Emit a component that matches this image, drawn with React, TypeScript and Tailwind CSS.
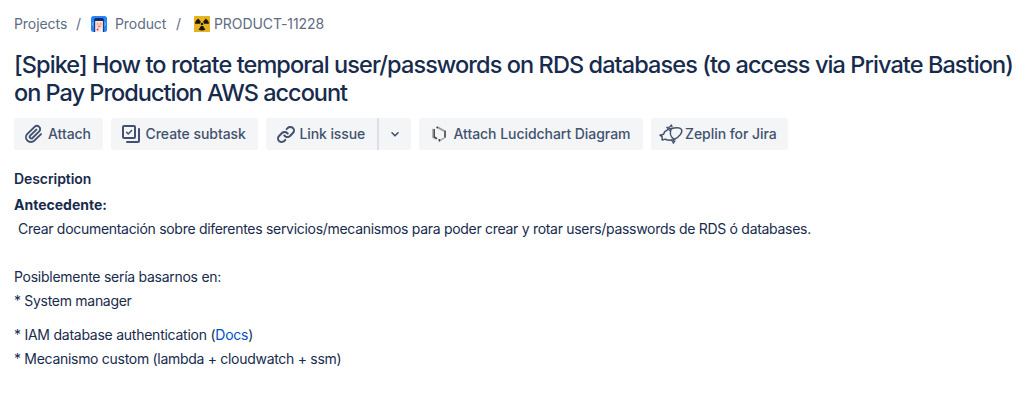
import React from "react";

function PortraitIcon() {
  return (
    <svg width="16" height="16" viewBox="0 0 16 16" className="shrink-0">
      <rect width="16" height="16" rx="2.5" fill="#2684ff" />
      <path d="M3.2 16V3.5Q3.2 2 4.7 2h6.6q1.5 0 1.5 1.5V16Z" fill="#172b5e" />
      <path d="M4.2 5h7.7v11H4.2Z" fill="#f3eef2" />
      <path d="M5 6h6.2v3.6a3.1 3.1 0 0 1-6.2 0Z" fill="#ffd0c2" />
      <path d="M2.5 6 1.3 8l1.2 2M13.5 6l1.2 2-1.2 2" stroke="#79b5ff" strokeWidth="1" fill="none" />
      <circle cx="6.7" cy="8" r=".7" fill="#e8897c" />
      <circle cx="9.7" cy="8" r=".7" fill="#e8897c" />
      <path d="M7 10.3h2.4" stroke="#d85a55" strokeWidth="1" />
      <circle cx="6.6" cy="13.6" r="1.1" fill="#f04438" />
    </svg>
  );
}

function RadiationIcon() {
  return (
    <svg width="16" height="16" viewBox="0 0 16 16" className="shrink-0">
      <rect width="16" height="16" fill="#e6b422" />
      <g fill="#17150c">
        <circle cx="8" cy="8" r="1.3" />
        <path d="M5.9 7.8H.9Q1.2 4.4 4.2 2.4L7 6Q6 6.8 5.9 7.8Z" />
        <path d="M10.1 7.8h5q-.3-3.4-3.3-5.4L9 6q1 .8 1.1 1.8Z" />
        <path d="M6.9 9.9h2.2l2.3 3.9q-3.4 1.5-6.8 0Z" />
      </g>
    </svg>
  );
}

function AttachIcon() {
  return (
    <svg width="24" height="24" viewBox="0 0 24 24" fill="currentColor" className="shrink-0">
      <path d="M11.643 17.965c-1.53 1.495-4.016 1.496-5.542.004a3.773 3.773 0 0 1 .002-5.412l7.147-6.985a2.316 2.316 0 0 1 3.233-.003c.893.873.895 2.282.004 3.153l-6.703 6.55a.653.653 0 0 1-.914-.008.62.62 0 0 1 0-.902l6.229-6.087a.941.941 0 0 0 0-1.353.995.995 0 0 0-1.384 0l-6.23 6.087a2.502 2.502 0 0 0 0 3.607 2.643 2.643 0 0 0 3.683.009l6.703-6.55a4.074 4.074 0 0 0-.003-5.859 4.306 4.306 0 0 0-6.002.003l-7.148 6.985a5.655 5.655 0 0 0-.001 8.118c2.29 2.239 6.015 2.238 8.31-.005l6.686-6.533a.941.941 0 0 0 0-1.353.995.995 0 0 0-1.384 0l-6.686 6.534z" />
    </svg>
  );
}

function SubtaskIcon() {
  return (
    <svg width="24" height="24" viewBox="0 0 24 24" fill="none" stroke="currentColor" strokeWidth="2" strokeLinecap="round" strokeLinejoin="round" className="shrink-0">
      <rect x="4" y="4" width="12" height="12" rx="1" />
      <path d="M20 7v12a1 1 0 0 1-1 1H8" />
      <path d="m7.6 10.2 1.7 1.7 3.3-3.4" strokeWidth="1.5" />
    </svg>
  );
}

function LinkIcon() {
  return (
    <svg width="24" height="24" viewBox="0 0 24 24" fill="currentColor" className="shrink-0">
      <path d="M12.856 5.457l-.937.92a1.002 1.002 0 0 0 0 1.437 1.047 1.047 0 0 0 1.463 0l.984-.966c.967-.95 2.542-1.135 3.602-.288a2.54 2.54 0 0 1 .203 3.81l-2.903 2.852a2.646 2.646 0 0 1-3.696 0l-1.11-1.09L9 13.57l1.108 1.089c1.822 1.788 4.802 1.788 6.622 0l2.905-2.852a4.558 4.558 0 0 0-.357-6.82c-1.893-1.517-4.695-1.226-6.422.47z" />
      <path d="M11.144 19.543l.937-.92a1.002 1.002 0 0 0 0-1.437 1.047 1.047 0 0 0-1.462 0l-.985.966c-.967.95-2.542 1.135-3.602.288a2.54 2.54 0 0 1-.203-3.81l2.903-2.852a2.646 2.646 0 0 1 3.696 0l1.11 1.09L15 11.43l-1.108-1.089c-1.822-1.788-4.802-1.788-6.622 0l-2.905 2.852a4.558 4.558 0 0 0 .357 6.82c1.893 1.517 4.695 1.226 6.422-.47z" />
    </svg>
  );
}

function LucidchartIcon() {
  return (
    <svg width="16" height="16" viewBox="0 0 16 16" fill="none" strokeWidth="1.6" className="shrink-0">
      <path d="M1.8 2.8v8.4l3.6 2.2" stroke="#b3b5b8" />
      <path d="M3.2 3v7.8l2.9 1.8" stroke="#3d3f42" strokeWidth="1.4" />
      <path d="M6.2 1.2 13 4.8" stroke="#9a9da2" strokeWidth="1.9" />
      <path d="M14 4.6v7.2" stroke="#3d3f42" />
      <path d="M14 11.6 9 14.4" stroke="#a4a7ab" />
      <path d="M8.4 13v2.4M6.2 .8v1.4" stroke="#3d3f42" />
    </svg>
  );
}

function ZeplinIcon() {
  return (
    <svg width="24" height="20" viewBox="0 0 24 20" fill="none" stroke="currentColor" strokeWidth="1.5" strokeLinejoin="round" className="shrink-0">
      <path d="M12.2 4.8C16 3.4 20.8 3.2 22.4 5.4c1.6 2.8-2.2 7.8-7 9.8-3.4-1.6-5-5.6-3.2-10.4Z" />
      <path d="M9.6 5 5.6 7.8 4.6 10.2 1 11.2l2 1.3.2 3.5 3.3-.9 1.6 1 4.6.2" />
      <path d="m9.8 5.4-2-2 2.8-.2L12.4 1l.8 2.4" strokeWidth="1.3" />
      <path d="m13.4 17 1 2.2 1.8-2.8" strokeWidth="1.3" />
      <circle cx="10.8" cy="5.3" r="1" strokeWidth="1.2" />
      <circle cx="13.6" cy="16" r="1" strokeWidth="1.2" />
    </svg>
  );
}

export default function App() {
  return (
    <main className="flex h-[411px] w-[1035px] flex-col overflow-hidden bg-white px-[14px] pt-3 font-['Inter',sans-serif] text-sm text-[#172b4d]">
      <nav className="flex h-6 items-center whitespace-nowrap text-[#5e6c84] tracking-[-0.07px]">
        <span className="w-[62px]">Projects</span>
        <span className="w-[15px]">/</span>
        <PortraitIcon />
        <span className="ml-2 w-[61px]">Product</span>
        <span className="w-[18px]">/</span>
        <RadiationIcon />
        <span className="ml-1">PRODUCT-11228</span>
      </nav>
      <h1 className="mt-[15px] text-[23.5px] font-medium leading-7 whitespace-nowrap">
        <span className="block tracking-[-0.915px]">[Spike] How to rotate temporal user/passwords on RDS databases (to access via Private Bastion)</span>
        <span className="block tracking-[-1px]">on Pay Production AWS account</span>
      </h1>
      <div className="mt-[11px] flex h-8 shrink-0 gap-2 whitespace-nowrap font-medium text-[#42526e] tracking-[-0.05px]">
        <button className="flex w-[89px] items-center rounded-[3px] bg-[#f4f5f7] pl-2">
          <AttachIcon /><span className="ml-0.5">Attach</span>
        </button>
        <button className="flex w-[147px] items-center rounded-[3px] bg-[#f4f5f7] pl-2">
          <SubtaskIcon /><span className="ml-[2.5px]">Create subtask</span>
        </button>
        <div className="flex">
          <button className="flex w-[111px] items-center rounded-l-[3px] bg-[#f4f5f7] pl-2">
            <LinkIcon /><span className="ml-[1.5px] tracking-[-0.1px]">Link issue</span>
          </button>
          <div className="w-0.5 bg-[#dcdfe5]" />
          <button aria-label="More link options" className="flex w-8 items-center justify-center rounded-r-[3px] bg-[#f4f5f7]">
            <svg width="10" height="8" viewBox="0 0 10 8" fill="none" stroke="currentColor" strokeWidth="1.6" strokeLinecap="round" strokeLinejoin="round"><path d="m2 2.8 3 3 3-3" /></svg>
          </button>
        </div>
        <button className="flex w-[224px] items-center rounded-[3px] bg-[#f4f5f7] pl-3">
          <LucidchartIcon /><span className="ml-[6.5px]">Attach Lucidchart Diagram</span>
        </button>
        <button className="flex w-[137px] items-center rounded-[3px] bg-[#f4f5f7] pl-2">
          <ZeplinIcon /><span className="ml-0.5">Zeplin for Jira</span>
        </button>
      </div>
      <section className="mt-5 whitespace-nowrap leading-6">
        <h2 className="h-[22px] font-semibold leading-[18px] tracking-[-0.07px]">Description</h2>
        <p className="h-6 font-bold leading-[26px]">Antecedente:</p>
        <div className="pt-px tracking-[-0.295px]">
          <p className="pl-1">Crear documentación sobre diferentes servicios/mecanismos para poder crear y rotar users/passwords de RDS ó databases.</p>
          <div className="mt-6">
            <p className="tracking-[-0.27px]">Posiblemente sería basarnos en:</p>
            <p>* System manager</p>
          </div>
          <div className="mt-2.5">
            <p className="tracking-[-0.25px]">* IAM database authentication (<a className="text-[#0052cc]">Docs</a>)</p>
            <p>* Mecanismo custom (lambda + cloudwatch + ssm)</p>
          </div>
        </div>
      </section>
    </main>
  );
}
